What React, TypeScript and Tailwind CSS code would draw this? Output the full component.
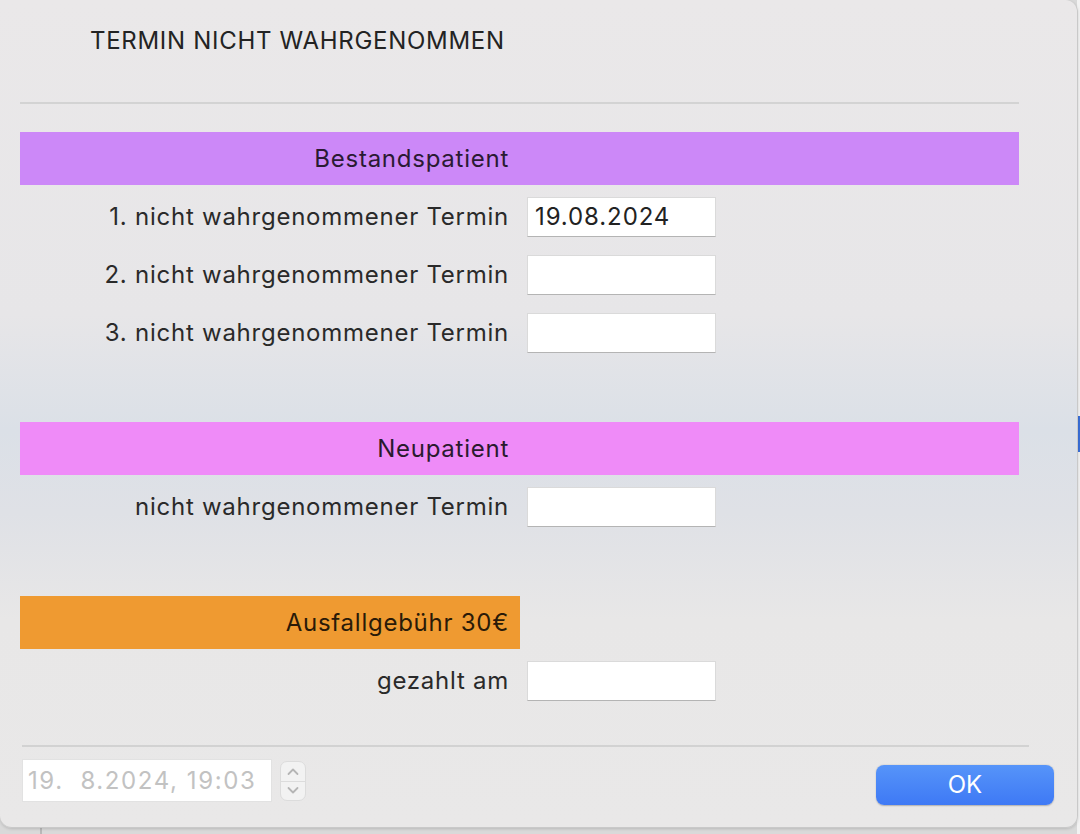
export default function App() {
  const font = { fontFamily: "Inter, 'Liberation Sans', sans-serif" };

  const Field = ({ value }: { value?: string }) => (
    <div className="w-[189px] h-[40px] bg-white border border-[#dadada] border-b-[#b4b4b4] flex items-center pl-[7px] text-[24px] tracking-[0.9px] text-[#222]">
      {value}
    </div>
  );

  const Row = ({ label, value, top }: { label: string; value?: string; top: string }) => (
    <div className={`flex items-center ${top}`}>
      <div className="w-[509px] text-right text-[24px] tracking-[0.75px] text-[#2a2a2a] leading-none">{label}</div>
      <div className="ml-[18px]">
        <Field value={value} />
      </div>
    </div>
  );

  return (
    <div className="w-[1080px] h-[834px] relative overflow-hidden bg-[#d9d9d9]" style={font}>
      {/* background window edges */}
      <div className="absolute left-[40px] top-[826px] w-[2px] h-[8px] bg-[#b8b8b8]" />
      <div className="absolute right-0 top-[0px] w-[3px] h-[834px] bg-[#f2f2f2]" />
      <div className="absolute right-0 top-[416px] w-[2px] h-[36px] bg-[#3a6fd8]" />

      {/* dialog */}
      <div className="relative w-[1078px] h-[828px] rounded-tr-[12px] rounded-b-[12px] border-r border-b border-[#c9c9c9] shadow-[0_1px_3px_rgba(0,0,0,0.15)] bg-[linear-gradient(180deg,#eae8e9_0%,#e7e6e8_38%,#dbe0e7_52%,#dfe1e6_62%,#e8e7e7_75%,#e9e8e8_100%)] flex flex-col">
        <div className="pl-[90px] pt-[28px] text-[24px] text-[#232323] tracking-[0.7px] leading-[26px]">
          TERMIN NICHT WAHRGENOMMEN
        </div>

        <div className="mt-[48px] ml-[20px] w-[999px] h-[2px] bg-[#d3d3d3]" />

        <div className="mt-[28px] ml-[20px] w-[999px] h-[53px] bg-[#cc88f8] flex items-center">
          <div className="w-[489px] text-right text-[24px] tracking-[0.75px] text-[#2a1a33]">Bestandspatient</div>
        </div>

        <Row label="1. nicht wahrgenommener Termin" value="19.08.2024" top="mt-[12px]" />
        <Row label="2. nicht wahrgenommener Termin" top="mt-[18px]" />
        <Row label="3. nicht wahrgenommener Termin" top="mt-[18px]" />

        <div className="mt-[69px] ml-[20px] w-[999px] h-[53px] bg-[#ef8bf8] flex items-center">
          <div className="w-[489px] text-right text-[24px] tracking-[0.75px] text-[#2a1a2e]">Neupatient</div>
        </div>

        <Row label="nicht wahrgenommener Termin" top="mt-[12px]" />

        <div className="mt-[69px] ml-[20px] w-[500px] h-[53px] bg-[#ef9a31] flex items-center justify-end pr-[11px]">
          <div className="text-[24px] tracking-[0.75px] text-[#2a1a08]">Ausfallgebühr 30€</div>
        </div>

        <Row label="gezahlt am" top="mt-[12px]" />

        <div className="mt-[44px] ml-[22px] w-[1007px] h-[2px] bg-[#d2d2d2]" />

        <div className="flex items-start mt-[12px] ml-[22px]">
          <div className="w-[250px] h-[43px] bg-white border border-[#e2e2e2] flex items-center pl-[5px] text-[24px] tracking-[1.6px] text-[#c2c2c2] whitespace-pre">
            19.  8.2024, 19:03
          </div>
          <div className="ml-[8px] mt-[2px] w-[26px] h-[40px] rounded-[7px] bg-[#f2f2f2] border border-[#dcdcdc] flex flex-col">
            <div className="flex-1 flex items-center justify-center border-b border-[#dcdcdc]">
              <svg width="14" height="9" viewBox="0 0 14 9" fill="none">
                <path d="M2.5 7 L7 2.5 L11.5 7" stroke="#b5b5b5" strokeWidth="1.8" strokeLinecap="round" strokeLinejoin="round" />
              </svg>
            </div>
            <div className="flex-1 flex items-center justify-center">
              <svg width="14" height="9" viewBox="0 0 14 9" fill="none">
                <path d="M2.5 2 L7 6.5 L11.5 2" stroke="#b5b5b5" strokeWidth="1.8" strokeLinecap="round" strokeLinejoin="round" />
              </svg>
            </div>
          </div>
          <div className="ml-auto mr-[23px] mt-[6px] w-[178px] h-[40px] rounded-[8px] bg-[linear-gradient(180deg,#5694f9,#3e79f5)] shadow-[0_0.5px_1.5px_rgba(0,0,0,0.25)] flex items-center justify-center text-white text-[24px]">
            OK
          </div>
        </div>
      </div>
    </div>
  );
}
